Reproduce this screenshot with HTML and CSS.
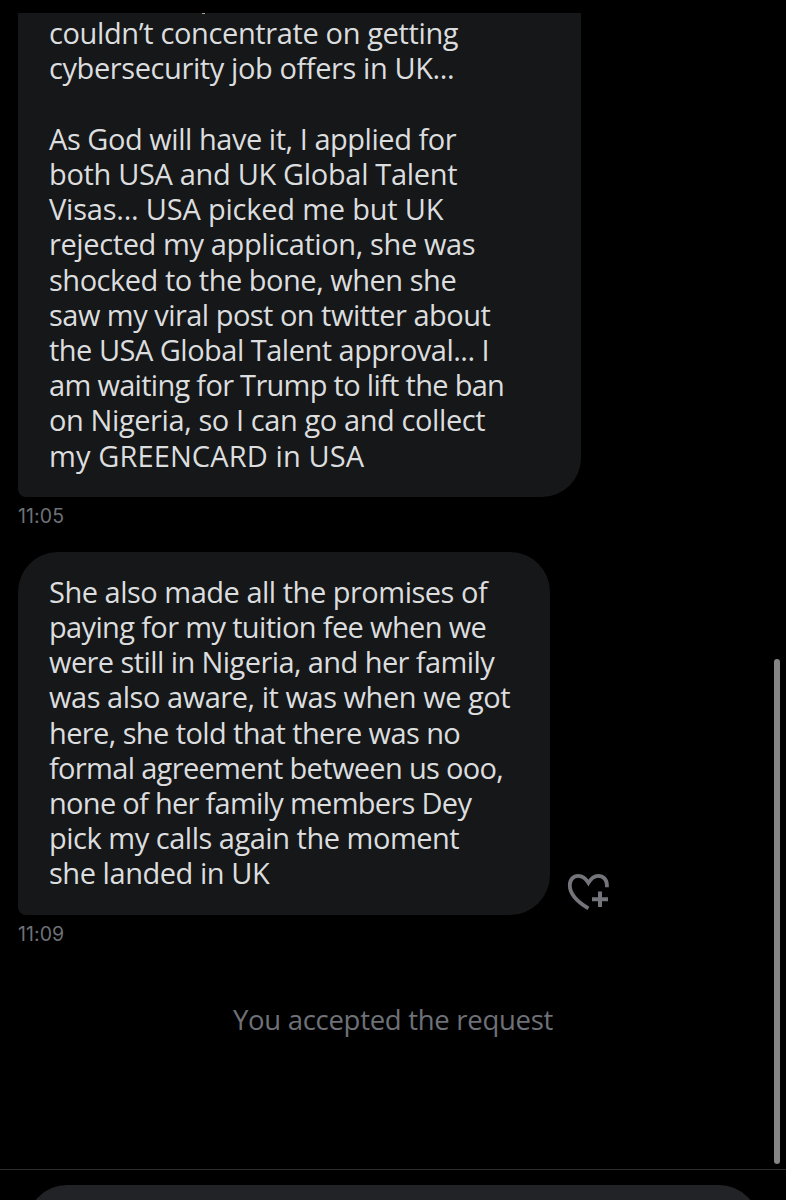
FILE: index.html
```html
<!DOCTYPE html>
<html lang="en">
<head>
<meta charset="utf-8">
<title>Messages</title>
<link rel="stylesheet" href="styles.css">
</head>
<body>
<main class="chat">
  <div class="bubble bubble-first">
    <i class="descender"></i>
    <p class="line" data-width="409">couldn’t concentrate on getting</p>
    <p class="line" data-width="405">cybersecurity job offers in UK...</p>
    <p class="line">&nbsp;</p>
    <p class="line" data-width="407">As God will have it, I applied for</p>
    <p class="line" data-width="408">both USA and UK Global Talent</p>
    <p class="line" data-width="394">Visas... USA picked me but UK</p>
    <p class="line" data-width="426">rejected my application, she was</p>
    <p class="line" data-width="407">shocked to the bone, when she</p>
    <p class="line" data-width="441">saw my viral post on twitter about</p>
    <p class="line" data-width="440">the USA Global Talent approval... I</p>
    <p class="line" data-width="455">am waiting for Trump to lift the ban</p>
    <p class="line" data-width="436">on Nigeria, so I can go and collect</p>
    <p class="line" data-width="315">my GREENCARD in USA</p>
  </div>
  <time class="stamp" data-width="46">11:05</time>
  <div class="row">
    <div class="bubble bubble-second">
      <p class="line" data-width="438">She also made all the promises of</p>
      <p class="line" data-width="437">paying for my tuition fee when we</p>
      <p class="line" data-width="445">were still in Nigeria, and her family</p>
      <p class="line" data-width="461">was also aware, it was when we got</p>
      <p class="line" data-width="411">here, she told that there was no</p>
      <p class="line" data-width="454">formal agreement between us ooo,</p>
      <p class="line" data-width="422">none of her family members Dey</p>
      <p class="line" data-width="410">pick my calls again the moment</p>
      <p class="line" data-width="220">she landed in UK</p>
    </div>
    <svg class="react" width="44" height="40" viewBox="0 0 44 40" fill="none" stroke="#73757a" stroke-width="3.8">
      <path d="M22.4 37.3C12.5 31.5 3.8 24 3.8 14.2C3.8 8.5 7.5 4.8 12.2 4.8C16.5 4.8 19.8 7.4 22.4 11.8C25 7.4 28.3 4.8 32.3 4.8C37.2 4.8 40.9 8.5 40.9 14.2V16.3"/>
      <path d="M34 20.5V36M26 28.3H42" stroke-width="4"/>
    </svg>
  </div>
  <time class="stamp" data-width="46">11:09</time>
  <p class="notice" data-width="320">You accepted the request</p>
</main>
<footer class="composer"><div class="field"></div></footer>
<div class="scrollbar"></div>
<script src="fit.js"></script>
</body>
</html>
```
FILE: styles.css
```css
* { box-sizing: border-box; }
body {
  margin: 0;
  height: 1200px;
  overflow: hidden;
  background: #000;
  color: #dcddde;
  font-family: "Open Sans", "Noto Sans", sans-serif;
  display: flex;
  flex-direction: column;
}
.chat {
  height: 1169px;
  padding: 12.5px 18px 0;
  display: flex;
  flex-direction: column;
  align-items: flex-start;
}
.bubble { background: #161719; padding-left: 31px; }
.bubble-first {
  position: relative;
  width: 562.5px;
  height: 484.5px;
  padding-top: 2.6px;
  border-radius: 0 0 39px 8px;
}
.descender {
  position: absolute;
  left: 184px;
  top: 0;
  width: 3px;
  height: 1.5px;
  background: #aaa59a;
}
.bubble-second {
  width: 531.5px;
  height: 363px;
  padding-top: 22.2px;
  border-radius: 40px 40px 40px 8px;
}
.line {
  margin: 0;
  width: max-content;
  font-size: 29px;
  line-height: 35.2px;
  white-space: pre;
}
.stamp {
  margin-top: 6px;
  height: 26px;
  font-family: Inter, sans-serif;
  font-size: 19.5px;
  line-height: 26px;
  color: #6e7177;
  width: max-content;
}
.row { display: flex; align-items: flex-end; margin-top: 22.5px; gap: 16.5px; }
.react { margin-bottom: 4px; }
.notice {
  align-self: center;
  margin: 55px 0 0;
  font-size: 27.5px;
  line-height: 36px;
  color: #6e7177;
  white-space: pre;
}
.composer {
  height: 31px;
  flex: none;
  padding: 15px 27px 0;
  border-top: 1px solid #2b2d30;
  overflow: hidden;
}
.field { height: 80px; border-radius: 44px; background: #212327; }
.scrollbar {
  position: absolute;
  left: 774px;
  top: 659px;
  width: 6px;
  height: 505px;
  border-radius: 3px;
  background: #858585;
}
```
FILE: fit.js
```js
// Tracks each line so that it fills its set measure.
document.querySelectorAll('[data-width]').forEach(function (el) {
  var width = el.getBoundingClientRect().width;
  var gap = (Number(el.dataset.width) + 0.2 - width) / el.textContent.length;
  el.style.letterSpacing = gap + 'px';
});
```
